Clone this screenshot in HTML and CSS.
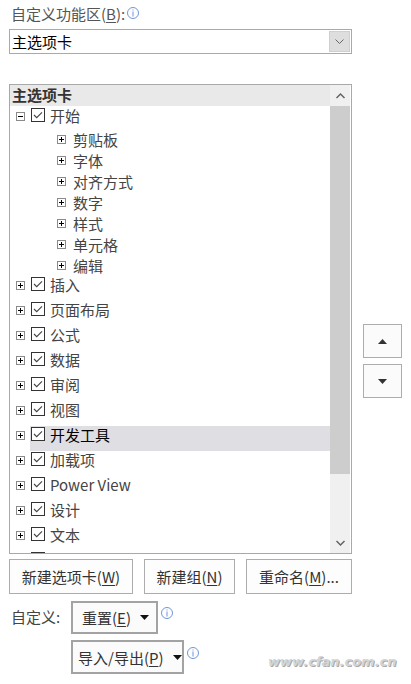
FILE: index.html
```html
<!DOCTYPE html>
<html lang="zh">
<head>
    <meta charset="UTF-8">
    <meta name="viewport" content="width=device-width, initial-scale=1.0">
    <title>自定义功能区</title>
    <link rel="stylesheet" href="styles.css">
</head>
<body>
    <div class="panel">
        <div class="label"><span>自定义功能区(<u>B</u>):</span><svg class="info" width="12" height="12" viewBox="0 0 12 12"><circle cx="6" cy="6" r="5.5" fill="none" stroke="#7195d8"/><rect x="5.5" y="2.5" width="1" height="1" fill="#7195d8"/><rect x="5.5" y="4.5" width="1" height="5" fill="#7195d8"/></svg></div>

        <div class="select">
            <span class="select-text">主选项卡</span>
            <span class="select-btn"><svg width="9" height="5" viewBox="0 0 9 5"><path d="M0.5 0.5 L4.5 4.5 L8.5 0.5" fill="none" stroke="#666"/></svg></span>
        </div>

        <div class="list-row">
            <div class="list">
                <div class="list-main">
                    <div class="list-head">主选项卡</div>
                    <div class="tree">
                        <div class="row first">
                            <svg class="exp" width="9" height="9" viewBox="0 0 9 9"><rect x="0.5" y="0.5" width="8" height="8" fill="#fff" stroke="#8a8a8a"/><rect x="2" y="4" width="5" height="1" fill="#000"/></svg>
                            <span class="item"><svg class="chk" width="14" height="14" viewBox="0 0 14 14"><rect x="0.5" y="0.5" width="13" height="13" fill="#fff" stroke="#333"/><path d="M3 7 L5.7 9.7 L11 4.3" fill="none" stroke="#444" stroke-width="1.1"/></svg><span class="txt">开始</span></span>
                        </div>
                        <div class="sub">
                            <div class="sub-row"><svg class="exp" width="9" height="9" viewBox="0 0 9 9"><rect x="0.5" y="0.5" width="8" height="8" fill="#fff" stroke="#8a8a8a"/><rect x="2" y="4" width="5" height="1" fill="#000"/><rect x="4" y="2" width="1" height="5" fill="#000"/></svg><span class="txt">剪贴板</span></div>
                            <div class="sub-row"><svg class="exp" width="9" height="9" viewBox="0 0 9 9"><rect x="0.5" y="0.5" width="8" height="8" fill="#fff" stroke="#8a8a8a"/><rect x="2" y="4" width="5" height="1" fill="#000"/><rect x="4" y="2" width="1" height="5" fill="#000"/></svg><span class="txt">字体</span></div>
                            <div class="sub-row"><svg class="exp" width="9" height="9" viewBox="0 0 9 9"><rect x="0.5" y="0.5" width="8" height="8" fill="#fff" stroke="#8a8a8a"/><rect x="2" y="4" width="5" height="1" fill="#000"/><rect x="4" y="2" width="1" height="5" fill="#000"/></svg><span class="txt">对齐方式</span></div>
                            <div class="sub-row"><svg class="exp" width="9" height="9" viewBox="0 0 9 9"><rect x="0.5" y="0.5" width="8" height="8" fill="#fff" stroke="#8a8a8a"/><rect x="2" y="4" width="5" height="1" fill="#000"/><rect x="4" y="2" width="1" height="5" fill="#000"/></svg><span class="txt">数字</span></div>
                            <div class="sub-row"><svg class="exp" width="9" height="9" viewBox="0 0 9 9"><rect x="0.5" y="0.5" width="8" height="8" fill="#fff" stroke="#8a8a8a"/><rect x="2" y="4" width="5" height="1" fill="#000"/><rect x="4" y="2" width="1" height="5" fill="#000"/></svg><span class="txt">样式</span></div>
                            <div class="sub-row"><svg class="exp" width="9" height="9" viewBox="0 0 9 9"><rect x="0.5" y="0.5" width="8" height="8" fill="#fff" stroke="#8a8a8a"/><rect x="2" y="4" width="5" height="1" fill="#000"/><rect x="4" y="2" width="1" height="5" fill="#000"/></svg><span class="txt">单元格</span></div>
                            <div class="sub-row"><svg class="exp" width="9" height="9" viewBox="0 0 9 9"><rect x="0.5" y="0.5" width="8" height="8" fill="#fff" stroke="#8a8a8a"/><rect x="2" y="4" width="5" height="1" fill="#000"/><rect x="4" y="2" width="1" height="5" fill="#000"/></svg><span class="txt">编辑</span></div>
                        </div>
                        <div id="topRows"></div>
                    </div>
                </div>
                <div class="scrollbar">
                    <div class="sb-arrow"><svg width="9" height="6" viewBox="0 0 9 6"><path d="M0.5 5 L4.5 1 L8.5 5" fill="none" stroke="#606060" stroke-width="1.4"/></svg></div>
                    <div class="sb-thumb"></div>
                    <div class="sb-track"></div>
                    <div class="sb-arrow"><svg width="9" height="6" viewBox="0 0 9 6"><path d="M0.5 1 L4.5 5 L8.5 1" fill="none" stroke="#606060" stroke-width="1.4"/></svg></div>
                </div>
            </div>
            <div class="move">
                <button class="move-btn"><svg width="9" height="5" viewBox="0 0 9 5"><path d="M0 5 L4.5 0 L9 5 Z" fill="#333"/></svg></button>
                <button class="move-btn"><svg width="9" height="5" viewBox="0 0 9 5"><path d="M0 0 L9 0 L4.5 5 Z" fill="#333"/></svg></button>
            </div>
        </div>

        <div class="btn-row">
            <button class="btn w1">新建选项卡(<u>W</u>)</button>
            <button class="btn w2">新建组(<u>N</u>)</button>
            <button class="btn w3">重命名(<u>M</u>)...</button>
        </div>

        <div class="custom-row">
            <span class="custom-label">自定义:</span>
            <button class="drop w4"><span>重置(<u>E</u>)</span><svg width="9" height="5" viewBox="0 0 9 5"><path d="M0 0 L9 0 L4.5 5 Z" fill="#111"/></svg></button>
            <svg class="info" width="12" height="12" viewBox="0 0 12 12"><circle cx="6" cy="6" r="5.5" fill="none" stroke="#7195d8"/><rect x="5.5" y="2.5" width="1" height="1" fill="#7195d8"/><rect x="5.5" y="4.5" width="1" height="5" fill="#7195d8"/></svg>
        </div>
        <div class="custom-row second">
            <button class="drop w5"><span>导入/导出(<u>P</u>)</span><svg width="9" height="5" viewBox="0 0 9 5"><path d="M0 0 L9 0 L4.5 5 Z" fill="#111"/></svg></button>
            <svg class="info" width="12" height="12" viewBox="0 0 12 12"><circle cx="6" cy="6" r="5.5" fill="none" stroke="#7195d8"/><rect x="5.5" y="2.5" width="1" height="1" fill="#7195d8"/><rect x="5.5" y="4.5" width="1" height="5" fill="#7195d8"/></svg>
        </div>
    </div>

    <div class="watermark">www.cfan.com.cn</div>

    <script>
        // 顶层选项卡
        const tabs = ["插入", "页面布局", "公式", "数据", "审阅", "视图", "开发工具", "加载项", "Power View", "设计", "文本", ""];
        const plus = '<svg class="exp" width="9" height="9" viewBox="0 0 9 9"><rect x="0.5" y="0.5" width="8" height="8" fill="#fff" stroke="#8a8a8a"/><rect x="2" y="4" width="5" height="1" fill="#000"/><rect x="4" y="2" width="1" height="5" fill="#000"/></svg>';
        const chk = '<svg class="chk" width="14" height="14" viewBox="0 0 14 14"><rect x="0.5" y="0.5" width="13" height="13" fill="#fff" stroke="#333"/><path d="M3 7 L5.7 9.7 L11 4.3" fill="none" stroke="#444" stroke-width="1.1"/></svg>';
        let html = "";
        tabs.forEach(function (name) {
            const cls = name === "开发工具" ? "item selected" : "item";
            html += '<div class="row">' + plus + '<span class="' + cls + '">' + chk + '<span class="txt">' + name + '</span></span></div>';
        });
        document.getElementById("topRows").innerHTML = html;
    </script>
</body>
</html>
```

FILE: styles.css
```css
body {
    margin: 0;
    background: #fff;
    font-family: "Noto Sans CJK SC", "Noto Sans", sans-serif;
    font-size: 15px;
    color: #444;
}

.panel {
    padding: 4px 0 0 9px;
    width: 400px;
}

u {
    text-decoration: underline;
    text-underline-offset: 2px;
}

.label {
    display: flex;
    align-items: flex-start;
    height: 20px;
    line-height: 20px;
    padding-left: 2px;
    color: #555;
}

.label .info {
    margin: 3px 0 0 2px;
}

.select {
    margin-top: 5px;
    width: 343px;
    height: 25px;
    box-sizing: border-box;
    border: 1px solid #a9a9a9;
    display: flex;
    align-items: center;
    justify-content: space-between;
}

.select-text {
    color: #000;
    padding-left: 2px;
    line-height: 20px;
}

.select-btn {
    width: 21px;
    height: 21px;
    margin-right: 1px;
    box-sizing: border-box;
    background: #dedede;
    border: 1px solid #cfcfcf;
    display: flex;
    align-items: center;
    justify-content: center;
}

.list-row {
    display: flex;
    margin-top: 30px;
}

.list {
    width: 343px;
    height: 470px;
    box-sizing: border-box;
    border: 1px solid #a9a9a9;
    display: flex;
}

.list-main {
    width: 320px;
    display: flex;
    flex-direction: column;
}

.list-head {
    height: 21px;
    line-height: 20px;
    background: #e9e9e9;
    font-weight: bold;
    color: #333;
    padding-left: 2px;
}

.tree {
    flex: 1;
    overflow: hidden;
    padding-top: 1px;
}

.row {
    height: 25px;
    display: flex;
    align-items: flex-start;
}

.row.first {
    height: 22px;
}

.row .exp {
    margin: 5px 0 0 6px;
    flex-shrink: 0;
}

.item {
    flex: 1;
    height: 25px;
    margin-left: 5px;
    padding-left: 1px;
    display: flex;
    align-items: flex-start;
}

.row.first .item {
    height: 22px;
}

.item.selected {
    background: #dfdee3;
}

.item.selected .txt {
    color: #000;
}

.chk {
    margin-top: 1px;
    flex-shrink: 0;
}

.txt {
    line-height: 20px;
    margin: -1px 0 0 5px;
    white-space: nowrap;
}

.sub-row {
    height: 21px;
    display: flex;
    align-items: center;
    padding-left: 47px;
}

.sub-row .txt {
    margin: 0 0 0 7px;
}

.scrollbar {
    width: 20px;
    margin-right: 1px;
    display: flex;
    flex-direction: column;
    background: #f0f0f0;
}

.sb-arrow {
    height: 21px;
    display: flex;
    align-items: center;
    justify-content: center;
}

.sb-thumb {
    height: 368px;
    background: #cdcdcd;
}

.sb-track {
    flex: 1;
}

.move {
    display: flex;
    flex-direction: column;
    gap: 6px;
    margin: 240px 0 0 11px;
}

.move-btn {
    width: 39px;
    height: 34px;
    padding: 0;
    border: 1px solid #adadad;
    background: #fbfbfb;
    display: flex;
    align-items: center;
    justify-content: center;
}

.btn-row {
    display: flex;
    gap: 11px;
    margin-top: 5px;
}

.btn {
    height: 35px;
    padding: 0;
    border: 1px solid #adadad;
    background: #fdfdfd;
    font-family: inherit;
    font-size: 15px;
    color: #333;
}

.w1 { width: 124px; }
.w2 { width: 91px; }
.w3 { width: 106px; }

.custom-row {
    display: flex;
    align-items: flex-start;
    margin-top: 7px;
}

.custom-row.second {
    margin-top: 6px;
    padding-left: 62px;
}

.custom-label {
    width: 62px;
    padding-left: 2px;
    box-sizing: border-box;
    line-height: 32px;
    color: #444;
}

.drop {
    height: 33px;
    box-sizing: border-box;
    border: 2px solid #a3a3a3;
    background: #fbfbfb;
    font-family: inherit;
    font-size: 15px;
    color: #333;
    display: flex;
    align-items: center;
    gap: 9px;
    padding: 0 0 0 9px;
    white-space: nowrap;
}

.w4 { width: 87px; }
.w5 { width: 113px; height: 34px; padding-left: 5px; }

.custom-row .info {
    margin: 6px 0 0 3px;
}

.custom-row.second .info {
    margin-top: 7px;
}

.watermark {
    position: absolute;
    left: 268px;
    top: 654px;
    font-family: "DejaVu Sans", sans-serif;
    font-style: italic;
    font-weight: bold;
    font-size: 13px;
    color: #d4d4d4;
    text-shadow: 1px 1px 0 #aaa;
}
```
